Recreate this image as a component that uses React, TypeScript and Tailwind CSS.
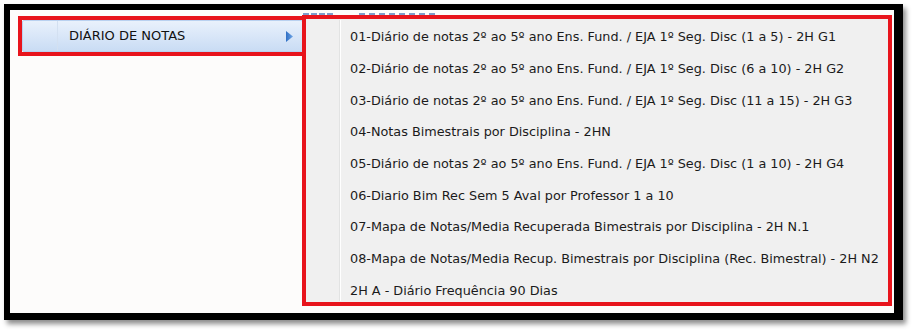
const items = [
  '01-Diário de notas 2º ao 5º ano Ens. Fund. / EJA 1º Seg. Disc (1 a 5) - 2H G1',
  '02-Diário de notas 2º ao 5º ano Ens. Fund. / EJA 1º Seg. Disc (6 a 10) - 2H G2',
  '03-Diário de notas 2º ao 5º ano Ens. Fund. / EJA 1º Seg. Disc (11 a 15) - 2H G3',
  '04-Notas Bimestrais por Disciplina - 2HN',
  '05-Diário de notas 2º ao 5º ano Ens. Fund. / EJA 1º Seg. Disc (1 a 10) - 2H G4',
  '06-Diario Bim Rec Sem 5 Aval por Professor 1 a 10',
  '07-Mapa de Notas/Media Recuperada Bimestrais por Disciplina - 2H N.1',
  '08-Mapa de Notas/Media Recup. Bimestrais por Disciplina (Rec. Bimestral) - 2H N2',
  '2H A - Diário Frequência 90 Dias'
];

export default function App() {
  return (
    <div className="h-[332px] w-[913px] bg-white pl-[4px] pt-[4px] font-['DejaVu_Sans',sans-serif] text-[13px] text-[#1b1b1b]">
      <div className="h-[316px] w-[899px] border-b-[7px] border-l-[6px] border-r-[9px] border-t-[6px] border-black bg-[#fdfcfb] shadow-[3px_4px_5px_rgba(0,0,0,0.45)]">
        <div className="relative flex pl-[8px] pt-[5px]">
          {/* bits of the page behind the menu */}
          <div className="absolute left-[293px] top-[3px] flex gap-[26px]">
            <div className="h-[2px] w-[30px] border-t-2 border-dashed border-[#7e9ccc]" />
            <div className="h-[2px] w-[76px] border-t-2 border-dashed border-[#7e9ccc]" />
          </div>

          <MainItem />
          <SubMenu />
        </div>
      </div>
    </div>
  );
}

function MainItem() {
  return (
    <div className="mt-[1px] h-[40px] w-[289px] border-4 border-[#e8141c] bg-[#fdfcfb]">
      <div className="flex h-full items-center rounded-[2px] border border-[#b9d1f0] bg-gradient-to-b from-[#e9f1fc] to-[#c9dcf4]">
        <div className="h-full w-[35px] border-r border-[#d3e0f1]" />
        <span className="ml-[11px] flex-1 text-[#111]">DIÁRIO DE NOTAS</span>
        <svg width="7" height="11" viewBox="0 0 7 11" className="mr-[9px]">
          <defs>
            <linearGradient id="arr" x1="0" y1="0" x2="1" y2="0">
              <stop offset="0" stopColor="#2f6fc4" />
              <stop offset="1" stopColor="#6fa5e6" />
            </linearGradient>
          </defs>
          <path d="M0 0 L7 5.5 L0 11 Z" fill="url(#arr)" />
        </svg>
      </div>
    </div>
  );
}

function SubMenu() {
  return (
    <div className="-ml-[5px] h-[291px] w-[590px] border-[4px] border-[#e8141c] bg-[#f0f0f0] p-[1px]">
      <div className="flex h-full overflow-hidden bg-[#f0f0f0]">
        <div className="w-[33px] shrink-0 border-r border-[#e2e3e3] shadow-[1px_0_0_#ffffff]" />
        <ul className="flex-1 pl-[10px] pt-[1px] text-[12.8px]">
          {items.map((t) => (
            <li key={t} className="flex h-[31.7px] items-center whitespace-nowrap">
              {t}
            </li>
          ))}
        </ul>
      </div>
    </div>
  );
}
